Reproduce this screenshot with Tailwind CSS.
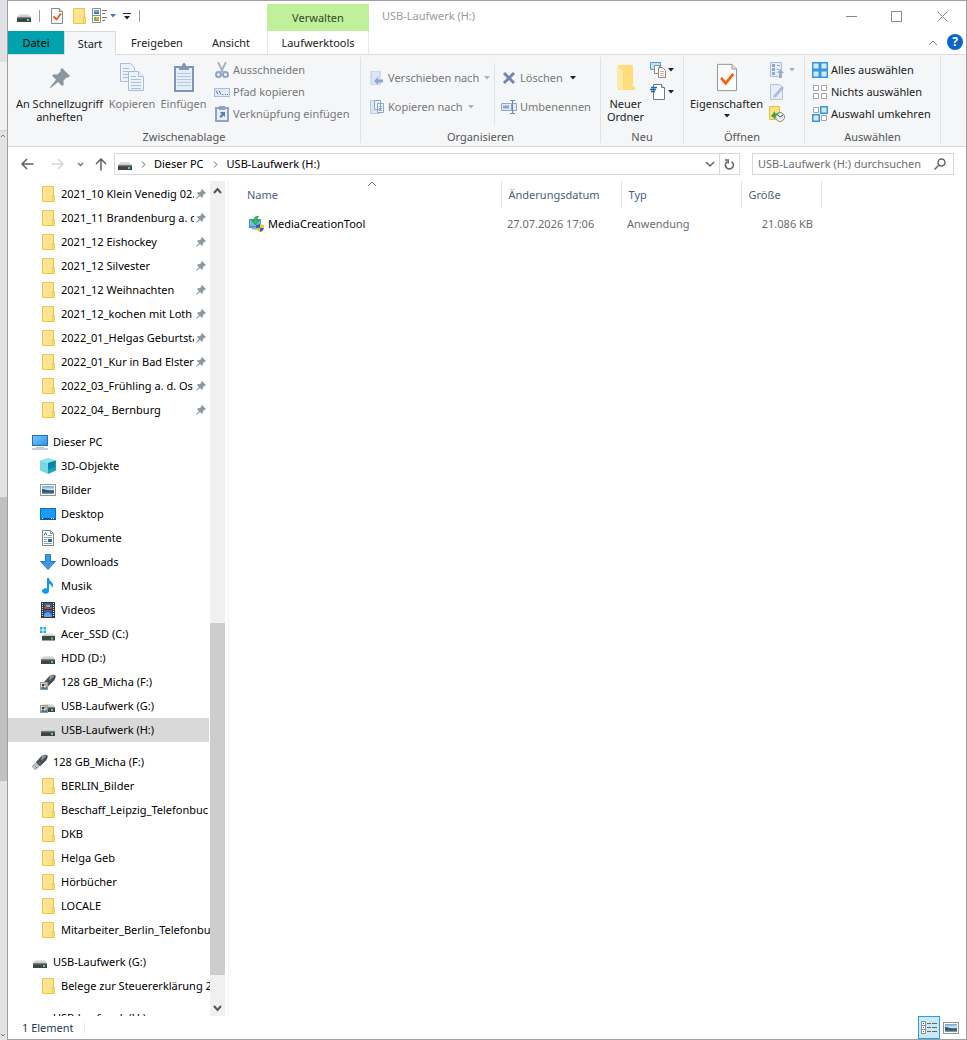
<!DOCTYPE html>
<html lang="de">
<head>
<meta charset="utf-8">
<title>USB-Laufwerk (H:)</title>
<script src="https://cdn.jsdelivr.net/npm/@tailwindcss/browser@4"></script>
</head>
<body class="flex h-screen overflow-hidden bg-white font-['Noto_Sans','Open_Sans',sans-serif] text-[11px] leading-4 text-black">

<svg width="0" height="0" class="absolute" aria-hidden="true">
  <defs>
    <linearGradient id="gFolder" x1="0" x2="1"><stop offset="0" stop-color="#ffe694"/><stop offset="1" stop-color="#ffdf85"/></linearGradient>
    <linearGradient id="gScreen" x1="0" y1="0" x2="1" y2="1"><stop offset="0" stop-color="#7cc8fa"/><stop offset="1" stop-color="#2196e8"/></linearGradient>
    <linearGradient id="gTop" x1="0" y1="0" x2="0" y2="1"><stop offset="0" stop-color="#e6e8ea"/><stop offset="1" stop-color="#bfc2c5"/></linearGradient>
    <linearGradient id="gPhoto" x1="0" y1="0" x2="0" y2="1"><stop offset="0" stop-color="#6ba0e4"/><stop offset=".5" stop-color="#e3f0f6"/><stop offset=".6" stop-color="#41705f"/><stop offset=".8" stop-color="#3b6a86"/><stop offset="1" stop-color="#7fb0dc"/></linearGradient>
    <symbol id="folder" viewBox="0 0 16 16"><path d="M2.500 .5h11v10h1v5h-12z" fill="url(#gFolder)" stroke="#e9c44f"/><path d="M12.500 15V9.500h2v5" fill="#ffe694" stroke="#e9c44f"/></symbol>
    <symbol id="pin" viewBox="0 0 10 10"><path d="M6 0l4 4-.8.800-.9-.1-1.600 1.700.2 1.900-.8.700-2.100-2L.4 10 0 9.600 3 5.900 1 3.900l.8-.8 1.900.2L5.300 1.700 5.200.8z" fill="#8b979f"/></symbol>
    <symbol id="drive" viewBox="0 0 16 16"><path d="M3.500 6h9L15 9.500H1z" fill="url(#gTop)"/><rect x="1" y="9.500" width="14" height="4.500" fill="#3e4447"/><path d="M1 9.500h14v1H1z" fill="#62696c"/><rect x="11" y="11" width="2" height="2" fill="#4ee05a"/></symbol>
    <symbol id="usb" viewBox="0 0 16 16"><path d="M9.500 2L13.500.5 16 2 14.500 6 8 12.500 3.800 8.300z" fill="#4a4f54"/><path d="M9.800 2.600l3.700-1.300 1 .7-5.500 4.800z" fill="#92999f"/><path d="M6 7.500l3 3" stroke="#7b8288"/><path d="M3.500 9L7 12.500l-3 2.800H2.800L.8 13.300v-1.500z" fill="#c9cdd1" stroke="#7a8086" stroke-width=".7"/><path d="M2.700 11.700l.8.800M4 13l.8.800" stroke="#444"/></symbol>
    <symbol id="users" viewBox="0 0 8 8"><rect x=".5" y=".5" width="7" height="7" fill="#e9e5df" stroke="#9a9a9a"/><circle cx="3" cy="3" r="1.300" fill="#57351f"/><circle cx="5.500" cy="2.500" r="1.200" fill="#c4884b"/><path d="M1.200 7c0-3 3-3 3.500-1L7 4v3z" fill="#2f7da6"/></symbol>
    <symbol id="ddblack" viewBox="0 0 6 4"><path d="M0 0h6L3 3.500z" fill="#222"/></symbol>
    <symbol id="ddgray" viewBox="0 0 6 4"><path d="M0 0h6L3 3.500z" fill="#aeb1b5"/></symbol>
    <symbol id="photo" viewBox="0 0 16 16"><rect x=".5" y="2.500" width="15" height="11" fill="#fff" stroke="#8f959b"/><rect x="2" y="4" width="12" height="8" fill="url(#gPhoto)"/><path d="M2 7c3 0 5 2 12 1.500v1.500H2z" fill="#2f5f4d"/></symbol>
    <symbol id="check" viewBox="0 0 24 32"><path d="M1.500 1.500h16l5 5v24h-21z" fill="#fbfbfb" stroke="#8b8b8b"/><path d="M17.500 1.500v5h5" fill="#e8e8e8" stroke="#8b8b8b"/><path d="M5.500 16.500l5 6L19 12" fill="none" stroke="#f7630c" stroke-width="3"/></symbol>
  </defs>
</svg>

<!-- edge of the window behind -->
<div class="flex w-[7px] shrink-0 flex-col bg-[#e3e3e3]" aria-hidden="true">
  <div class="h-[62px] bg-[#dfdfe4]"></div>
  <div class="h-[69px] border-b border-[#cfcfcf] bg-[#f1f1f2]"></div>
  <svg class="h-[10px] w-[7px]" viewBox="0 0 7 10" fill="none" stroke="#777"><path d="M1 6l2-2 2 2"/></svg>
  <div class="h-[356px]"></div>
  <div class="h-[284px] bg-[#c1c1c1]"></div>
  <div class="flex-1"></div>
  <svg class="h-[10px] w-[7px]" viewBox="0 0 7 10" fill="none" stroke="#777"><path d="M1 4l2 2 2-2"/></svg>
</div>

<div class="flex min-w-0 flex-1 flex-col border border-[#9f9f9f]">

  <!-- title bar and tabs -->
  <header class="relative flex h-[53px] shrink-0 flex-col">
    <div class="flex h-[30px] items-center">
      <div class="flex w-[259px] items-center pl-2">
        <svg class="size-4"><use href="#drive"/></svg>
        <span class="mr-[9px] ml-[7px] h-3 w-px bg-[#9a9a9a]"></span>
        <button aria-label="Eigenschaften" class="mr-[6px]"><svg class="size-4" viewBox="0 0 16 16"><path d="M2.500.5h8l3 3v12h-11z" fill="#fbfbfb" stroke="#8b8b8b"/><path d="M10.500.5v3h3" fill="#e8e8e8" stroke="#8b8b8b"/><path d="M4.500 8.500l3 3 4.500-6" fill="none" stroke="#e8562a" stroke-width="1.800"/></svg></button>
        <button aria-label="Neuer Ordner" class="mr-[5px]"><svg class="size-4"><use href="#folder"/></svg></button>
        <button aria-label="Ansicht" class="flex items-center gap-[2px]">
          <svg class="size-4" viewBox="0 0 16 16"><path d="M.5.5h8v14h-8zM.5 7.500h8" fill="#fff" stroke="#8c8c8c"/><rect x="2" y="2" width="5" height="4" fill="#5aa5e8"/><path d="M2 4l2 1 3-1v2H2z" fill="#3c6c9b"/><rect x="2" y="9" width="5" height="4" fill="#6ab04a"/><rect x="4" y="9" width="3" height="3" fill="#e8a13a"/><path d="M10 2.500h5M10 5.500h3M10 9.500h5M10 12.500h3" stroke="#777"/></svg>
          <svg class="h-1 w-[6px]" viewBox="0 0 6 4"><path d="M0 0h6L3 3.500z" fill="#4a7ab5"/></svg>
        </button>
        <button aria-label="Symbolleiste anpassen" class="ml-[7px]"><svg class="h-2 w-[8px]" viewBox="0 0 8 8"><path d="M0 1.500h8" stroke="#222"/><path d="M1 4h6L4 7.500z" fill="#222"/></svg></button>
        <span class="ml-2 h-3 w-px bg-[#9a9a9a]"></span>
      </div>
      <div class="mt-[3px] flex h-[27px] w-[102px] items-center justify-center bg-[#c1f09b] text-[#2d4a24]">Verwalten</div>
      <h1 class="ml-[13px] flex-1 text-[#9a9a9a]">USB-Laufwerk (H:)</h1>
      <button aria-label="Minimieren" class="flex h-full w-[45px] items-center justify-center"><svg class="size-[11px]" viewBox="0 0 11 11" stroke="#888" fill="none"><path d="M0 5.500h11"/></svg></button>
      <button aria-label="Maximieren" class="flex h-full w-[45px] items-center justify-center"><svg class="size-[11px]" viewBox="0 0 11 11" stroke="#888" fill="none"><path d="M.5.5h10v10H.5z"/></svg></button>
      <button aria-label="Schließen" class="flex h-full w-[47px] items-center justify-center"><svg class="size-[11px]" viewBox="0 0 11 11" stroke="#888" fill="none"><path d="M.5.5l10 10M10.500.5l-10 10"/></svg></button>
    </div>
    <nav class="flex h-[24px] text-[#222]" aria-label="Menüband">
      <button class="h-[23px] w-[56px] bg-[#00a2ad] text-black">Datei</button>
      <button class="relative z-10 h-[24px] w-[52px] border border-b-0 border-[#dadbdc] bg-[#f5f6f7]">Start</button>
      <button class="h-[23px] w-[82px]">Freigeben</button>
      <button class="h-[23px] w-[66px]">Ansicht</button>
      <button class="ml-[3px] h-[23px] w-[102px] border-x border-[#e6e6e6]">Laufwerktools</button>
      <span class="flex-1"></span>
      <button aria-label="Menüband minimieren" class="mr-[9px] flex items-center"><svg class="h-[6px] w-[10px]" viewBox="0 0 10 6" fill="none" stroke="#8a8a8a"><path d="M1 5l4-4 4 4"/></svg></button>
      <button aria-label="Hilfe" class="mr-[3px] mt-[3px] flex size-4 items-center justify-center rounded-full bg-[#0a66c8] text-[12px] font-bold text-white">?</button>
    </nav>
  </header>

  <!-- ribbon -->
  <section class="flex h-[93px] shrink-0 border-y border-[#dadbdc] bg-[#f5f6f7] pt-[2px] pb-[3px] text-[#222]">
    <div class="flex w-[353px] shrink-0 flex-col border-r border-[#e0e1e3]">
      <div class="flex flex-1 whitespace-nowrap">
        <button class="flex w-[103px] flex-col items-center leading-[13px]"><svg class="mt-[11px] mb-[9px] size-5"><use href="#pin"/></svg>An Schnellzugriff<br>anheften</button>
        <button class="flex w-[42px] flex-col items-center leading-[13px] text-[#777]">
          <svg class="mt-[6px] mb-[6px] h-7 w-6" viewBox="0 0 24 28" fill="#eef3fb" stroke="#a9bddb"><path d="M.5.5h10l4 4v14H.5z"/><path d="M3 5.500h6M3 8.500h9M3 11.500h9M3 14.500h9"/><path d="M8.500 8.500h10l5 5v14h-15z"/><path d="M18.500 8.500v5h5M11 13.500h5M11 16.500h10M11 19.500h10M11 22.500h10M11 25.500h10"/></svg>Kopieren</button>
        <button class="flex w-[61px] flex-col items-center leading-[13px] text-[#777]">
          <svg class="mt-[6px] mb-[5px] h-[29px] w-5" viewBox="0 0 20 29"><rect x="1" y="4" width="18" height="24" fill="#e6eefa" stroke="#7f93b8" stroke-width="2"/><path d="M5 3h3c0-4 4-4 4 0h3v4H5z" fill="#8496b5"/><path d="M3 10.500h14M3 13.500h14M3 16.500h14M3 19.500h14M3 22.500h14" stroke="#b4c7e3"/></svg>Einfügen</button>
        <div class="flex flex-col items-start pt-[2px] text-[#777]">
          <button class="flex h-[22px] items-center gap-[3px]"><svg class="size-4" viewBox="0 0 16 16" fill="none" stroke="#8ea3c4"><path d="M4 0l5 10M12 0L7 10" stroke-width="1.800" stroke="#a5aeb9"/><circle cx="4.500" cy="12.500" r="2.500" stroke-width="2"/><circle cx="11.500" cy="12.500" r="2.500" stroke-width="2"/></svg>Ausschneiden</button>
          <button class="flex h-[22px] items-center gap-[3px]"><svg class="size-4" viewBox="0 0 16 16" fill="none"><rect x=".5" y="4.500" width="15" height="8" fill="#e3ebf7" stroke="#a9bddb"/><path d="M2 6.500l2 4M5 6.500l2 4M8.500 10.500h1M11 10.500h1M13 10.500h1" stroke="#5f7398"/></svg>Pfad kopieren</button>
          <button class="flex h-[22px] items-center gap-[3px]"><svg class="size-4" viewBox="0 0 16 16"><rect x="2" y="2" width="12" height="13" fill="#e6eefa" stroke="#8fa3c5" stroke-width="2"/><path d="M5 0h6v4H5z" fill="#8fa3c5"/><path d="M6 6h5v5L9.500 9.500 7 12 5.500 10.500 7.500 8z" fill="#657da6"/></svg>Verknüpfung einfügen</button>
        </div>
      </div>
      <div class="h-[14px] text-center text-[#555]">Zwischenablage</div>
    </div>
    <div class="flex w-[240px] shrink-0 flex-col border-r border-[#e0e1e3]">
      <div class="flex flex-1 whitespace-nowrap pt-[6px] pb-1 text-[#777]">
        <div class="flex w-[134px] flex-col items-start border-r border-[#e0e1e3] pl-[9px]">
          <button class="mt-[4px] flex h-[22px] items-center gap-1"><svg class="size-3.5" viewBox="0 0 14 14"><path d="M1 0h9v14H1z" fill="#dce6f5" stroke="#bccce4"/><path d="M4 10l4-4v2.500h5v3H8V14z" fill="#8fa6cb"/></svg>Verschieben nach<svg class="ml-px h-1 w-[6px]"><use href="#ddgray"/></svg></button>
          <button class="mt-[7px] flex h-[22px] items-center gap-1"><svg class="size-3.5" viewBox="0 0 14 14"><path d="M.5.5h9v13h-9z" fill="#dce6f5" stroke="#bccce4"/><path d="M4.500.5h6v9h-6zM7.500 3.500h6v9h-6z" fill="#eef3fb" stroke="#8fa6cb"/><path d="M9 6.500h3M9 8.500h3M9 10.500h3" stroke="#8fa6cb"/></svg>Kopieren nach<svg class="ml-px h-1 w-[6px]"><use href="#ddgray"/></svg></button>
        </div>
        <div class="flex flex-col items-start pl-[6px]">
          <button class="mt-[4px] flex h-[22px] items-center gap-[3px]"><svg class="size-4" viewBox="0 0 16 16"><path d="M3 3l10 10M13 3L3 13" stroke="#6f87ad" stroke-width="3"/></svg><span>Löschen</span><svg class="ml-1 h-1 w-[6px]"><use href="#ddblack"/></svg></button>
          <button class="mt-[7px] flex h-[22px] items-center gap-[3px]"><svg class="size-4" viewBox="0 0 16 16" fill="none" stroke="#8fa6cb"><path d="M.5 4.500h10v7H.5zM12 4.500h3.500v7H12" fill="#e3ebf7"/><path d="M2 8h6" stroke-width="3"/><path d="M9 1.500h5M11.500 2v12M9 14.500h5" stroke="#6f87ad"/></svg>Umbenennen</button>
        </div>
      </div>
      <div class="h-[14px] text-center text-[#555]">Organisieren</div>
    </div>
    <div class="flex w-[83px] shrink-0 flex-col border-r border-[#e0e1e3]">
      <div class="flex flex-1">
        <button class="flex w-[49px] flex-col items-center leading-[13px]">
          <svg class="mt-[8px] mb-[6px] h-[26px] w-5" viewBox="0 0 20 26"><path d="M2 0h15v21l2 1v3H2z" fill="#ffdc7c"/><path d="M1 1l6 5v20l-6-4z" fill="#ffe9a8"/></svg>Neuer<br>Ordner</button>
        <div class="flex flex-col pt-[2px]">
          <button aria-label="Neues Element" class="flex h-[22px] items-center gap-[2px]"><svg class="size-4" viewBox="0 0 16 16" fill="#fff"><path d="M.5.5h10v7H.5z" fill="#bfe3f7" stroke="#4a9cc9"/><path d="M4.500 3.500h5v8h-5z" stroke="#888"/><path d="M8.500 5.500h4l3 3v7h-7z" stroke="#888"/><path d="M10 9.500h4M10 11.500h4M10 13.500h4" stroke="#e8a090"/></svg><svg class="h-1 w-[6px]"><use href="#ddblack"/></svg></button>
          <button aria-label="Einfacher Zugriff" class="flex h-[22px] items-center gap-[2px]"><svg class="size-4" viewBox="0 0 16 16" fill="#fff"><path d="M3.500.5h8l3 3v12h-11z" stroke="#777"/><path d="M11.500.5v3h3" stroke="#777"/><path d="M1 3.500h6M0 5.500h6M1 7.500h4" stroke="#1f6cb0" stroke-width="1.300"/></svg><svg class="h-1 w-[6px]"><use href="#ddblack"/></svg></button>
        </div>
      </div>
      <div class="h-[14px] text-center text-[#555]">Neu</div>
    </div>
    <div class="flex w-[121px] shrink-0 flex-col border-r border-[#e0e1e3]">
      <div class="flex flex-1">
        <button class="flex w-[85px] flex-col items-center leading-[13px]"><svg class="mt-[6px] mb-[5px] h-[29px] w-6"><use href="#check"/></svg>Eigenschaften<svg class="mt-[4px] h-1 w-[6px]"><use href="#ddblack"/></svg></button>
        <div class="flex flex-col items-start pt-[2px]">
          <button aria-label="Öffnen" class="flex h-[22px] items-center gap-[4px]"><svg class="size-4" viewBox="0 0 16 16"><path d="M1.500.5h11v14h-11z" fill="#e6eefa" stroke="#a9bddb"/><path d="M3 2h3v3H3zM3 6h3v3H3zM3 10h3v3H3z" fill="#8fa6cb"/><path d="M8 3.500h3M8 7.500h2" stroke="#8fa6cb"/><path d="M8 11l3.500-4 3.500 4h-2v5h-3v-5z" fill="#9badcf"/></svg><svg class="h-1 w-[6px]"><use href="#ddgray"/></svg></button>
          <button aria-label="Bearbeiten" class="flex h-[22px] items-center"><svg class="size-4" viewBox="0 0 16 16"><path d="M1.500.5h9l3 3v12h-12z" fill="#e6eefa" stroke="#b4c4de"/><path d="M4 14l1-3 8-9 2 2-8 9z" fill="#a9bddb"/></svg></button>
          <button aria-label="Verlauf" class="flex h-[22px] items-center"><svg class="size-4" viewBox="0 0 16 16"><path d="M.5.5h10v13H.5z" fill="#ffe27a" stroke="#e3bd45"/><circle cx="11" cy="11" r="4.500" fill="#e9ebed" stroke="#8a8a8a"/><path d="M9 9l2 2 3-2" fill="none" stroke="#555"/><path d="M2 10l4-5v2.500c2 0 3 0 4-1.500-.3 3-2 4-4 4V13z" fill="#2fa84a"/></svg></button>
        </div>
      </div>
      <div class="h-[14px] pr-1 text-center text-[#555]">Öffnen</div>
    </div>
    <div class="flex w-[136px] shrink-0 flex-col border-r border-[#e0e1e3]">
      <div class="flex flex-1 flex-col items-start whitespace-nowrap pt-[2px] pl-[7px]">
        <button class="flex h-[22px] items-center gap-[3px]"><svg class="size-4" viewBox="0 0 16 16" fill="#cdeaff" stroke="#3a96dd" stroke-width="1.500"><path d="M.7.700h6.600v6.600H.7zM8.700.7h6.600v6.600H8.700zM.7 8.700h6.600v6.600H.7zM8.700 8.700h6.600v6.600H8.700z"/></svg>Alles auswählen</button>
        <button class="flex h-[22px] items-center gap-[3px]"><svg class="size-4" viewBox="0 0 16 16" fill="#fff" stroke="#a5a5a5"><path d="M1.500 1.500h5v5h-5zM9.500 1.500h5v5h-5zM1.500 9.500h5v5h-5zM9.500 9.500h5v5h-5z"/></svg>Nichts auswählen</button>
        <button class="flex h-[22px] items-center gap-[3px]"><svg class="size-4" viewBox="0 0 16 16" fill="#fff" stroke="#a5a5a5"><path d="M1.500 1.500h5v5h-5zM9.500 9.500h5v5h-5z"/><path d="M8.700.7h6.600v6.600H8.700zM.7 8.700h6.600v6.600H.7z" fill="#cdeaff" stroke="#3a96dd" stroke-width="1.500"/></svg>Auswahl umkehren</button>
      </div>
      <div class="h-[14px] text-center text-[#555]">Auswählen</div>
    </div>
  </section>

  <!-- navigation and address bar -->
  <div class="flex h-[34px] shrink-0 items-center pr-3">
    <div class="flex w-[106px] items-center pl-[13px]">
      <button aria-label="Zurück"><svg class="h-3 w-[13px]" viewBox="0 0 13 12" fill="none" stroke="#5f5f5f" stroke-width="1.500"><path d="M12.500 6H1M6 1L1 6l5 5"/></svg></button>
      <button aria-label="Vorwärts" class="ml-[17px]"><svg class="h-3 w-[13px]" viewBox="0 0 13 12" fill="none" stroke="#d6d6d6" stroke-width="1.500"><path d="M.5 6H12M7 1l5 5-5 5"/></svg></button>
      <button aria-label="Zuletzt besucht" class="ml-[13px]"><svg class="h-[5px] w-[7px]" viewBox="0 0 7 5" fill="none" stroke="#777" stroke-width="1.500"><path d="M1 1l2.500 2.500L6 1"/></svg></button>
      <button aria-label="Nach oben" class="ml-[11px]"><svg class="h-[13px] w-[12px]" viewBox="0 0 12 13" fill="none" stroke="#5f5f5f" stroke-width="1.500"><path d="M6 12.500V1M1 6l5-5 5 5"/></svg></button>
    </div>
    <div class="flex h-[22px] min-w-0 flex-1 items-center border border-[#d9d9d9] pl-[2px]">
      <svg class="size-4"><use href="#drive"/></svg>
      <svg class="mx-[8px] h-[7px] w-[5px]" viewBox="0 0 5 7" fill="none" stroke="#666"><path d="M1 .5l3 3-3 3"/></svg>
      <a href="#">Dieser PC</a>
      <svg class="mx-[9px] h-[7px] w-[5px]" viewBox="0 0 5 7" fill="none" stroke="#666"><path d="M1 .5l3 3-3 3"/></svg>
      <a href="#">USB-Laufwerk (H:)</a>
      <span class="flex-1"></span>
      <button aria-label="Vorherige Orte" class="mr-1"><svg class="h-[7px] w-[10px]" viewBox="0 0 10 7" fill="none" stroke="#666" stroke-width="1.500"><path d="M1 1l4 4 4-4"/></svg></button>
      <button aria-label="Aktualisieren" class="flex h-full w-[20px] items-center justify-center border-l border-[#d9d9d9]"><svg class="size-[11px]" viewBox="0 0 11 11" fill="none" stroke="#666" stroke-width="1.600"><path d="M7.500 2.600A4 4 0 1 1 3.200 2.700"/><path d="M1 1h3.200v3.500"/></svg></button>
    </div>
    <label class="ml-3 flex h-[22px] w-[202px] items-center border border-[#d9d9d9] pr-[7px] pl-[5px]">
      <input type="text" aria-label="Durchsuchen" placeholder="USB-Laufwerk (H:) durchsuchen" class="min-w-0 flex-1 outline-none placeholder:text-[#6d6d6d]">
      <svg class="size-3" viewBox="0 0 12 12" fill="none" stroke="#666" stroke-width="1.500"><circle cx="7.500" cy="4.500" r="3.500"/><path d="M5 7L.5 11.500"/></svg>
    </label>
  </div>

  <!-- main area -->
  <div class="flex min-h-0 flex-1">
    <nav aria-label="Navigationsbereich" class="w-[202px] shrink-0 overflow-hidden whitespace-nowrap pt-px">
      <ul class="mb-2 [&_a]:flex [&_a]:h-6 [&_a]:items-center [&_a]:pr-1 [&_a]:pl-8 [&_span]:ml-[5px] [&_span]:mr-[2px] [&_span]:flex-1 [&_span]:overflow-hidden">
        <li><a href="#"><svg class="size-4 shrink-0"><use href="#folder"/></svg><span>2021_10 Klein Venedig 02.</span><svg class="size-[10px] shrink-0"><use href="#pin"/></svg></a></li>
        <li><a href="#"><svg class="size-4 shrink-0"><use href="#folder"/></svg><span>2021_11 Brandenburg a. d</span><svg class="size-[10px] shrink-0"><use href="#pin"/></svg></a></li>
        <li><a href="#"><svg class="size-4 shrink-0"><use href="#folder"/></svg><span>2021_12 Eishockey</span><svg class="size-[10px] shrink-0"><use href="#pin"/></svg></a></li>
        <li><a href="#"><svg class="size-4 shrink-0"><use href="#folder"/></svg><span>2021_12 Silvester</span><svg class="size-[10px] shrink-0"><use href="#pin"/></svg></a></li>
        <li><a href="#"><svg class="size-4 shrink-0"><use href="#folder"/></svg><span>2021_12 Weihnachten</span><svg class="size-[10px] shrink-0"><use href="#pin"/></svg></a></li>
        <li><a href="#"><svg class="size-4 shrink-0"><use href="#folder"/></svg><span>2021_12_kochen mit Loth</span><svg class="size-[10px] shrink-0"><use href="#pin"/></svg></a></li>
        <li><a href="#"><svg class="size-4 shrink-0"><use href="#folder"/></svg><span>2022_01_Helgas Geburtsta</span><svg class="size-[10px] shrink-0"><use href="#pin"/></svg></a></li>
        <li><a href="#"><svg class="size-4 shrink-0"><use href="#folder"/></svg><span>2022_01_Kur in Bad Elster</span><svg class="size-[10px] shrink-0"><use href="#pin"/></svg></a></li>
        <li><a href="#"><svg class="size-4 shrink-0"><use href="#folder"/></svg><span>2022_03_Frühling a. d. Os</span><svg class="size-[10px] shrink-0"><use href="#pin"/></svg></a></li>
        <li><a href="#"><svg class="size-4 shrink-0"><use href="#folder"/></svg><span>2022_04_ Bernburg</span><svg class="size-[10px] shrink-0"><use href="#pin"/></svg></a></li>
      </ul>
      <a href="#" class="flex h-6 items-center gap-[5px] pl-6"><svg class="size-4 shrink-0" viewBox="0 0 16 16"><rect x=".5" y="1.500" width="15" height="10" fill="url(#gScreen)" stroke="#2a6fa8"/><path d="M4 13h8v1H4z" fill="#b9c4cc"/><path d="M0 14.500h16v1H0z" fill="#8fa0ad"/></svg>Dieser PC</a>
      <ul class="mb-2 [&_a]:flex [&_a]:h-6 [&_a]:items-center [&_a]:gap-[5px] [&_a]:pl-8">
        <li><a href="#"><svg class="size-4 shrink-0" viewBox="0 0 16 16"><path d="M0 2.500L8 0l8 2.500L8 5z" fill="#8de3ea"/><path d="M8 5l8-2.500v10L8 16z" fill="#17a5c0"/><path d="M0 2.500L8 5v11l-8-3.500z" fill="#7ad6e2"/><path d="M8 5l8-2.500-1.500 7L8 12z" fill="#0787a5"/></svg>3D-Objekte</a></li>
        <li><a href="#"><svg class="size-4 shrink-0"><use href="#photo"/></svg>Bilder</a></li>
        <li><a href="#"><svg class="size-4 shrink-0" viewBox="0 0 16 16"><rect x=".5" y="2.500" width="15" height="11" fill="#1c9df5" stroke="#0e6db5"/><path d="M1 12h14v1.500H1z" fill="#0b4f86"/><path d="M11 12.500h1M13 12.500h1M2 12.500h1" stroke="#fff"/></svg>Desktop</a></li>
        <li><a href="#"><svg class="size-4 shrink-0" viewBox="0 0 16 16"><path d="M2.500.5h8l3 3v12h-11z" fill="#fff" stroke="#848484"/><path d="M10.500.5v3h3" fill="none" stroke="#848484"/><path d="M8 5.500h4M4 7.500h8M4 9.500h3M4 11.500h3M4 13.500h8" stroke="#7fa8c0"/><path d="M4 5.500l1.500-3L7 5.500" fill="none" stroke="#2f7fb8"/><path d="M8 9h4v3H8z" fill="#3a668f"/></svg>Dokumente</a></li>
        <li><a href="#"><svg class="size-4 shrink-0" viewBox="0 0 16 16"><path d="M5.500.5h5v7h5L8 15.500.5 7.500h5z" fill="#3b97e8" stroke="#2678c4"/></svg>Downloads</a></li>
        <li><a href="#"><svg class="size-4 shrink-0" viewBox="0 0 16 16"><path d="M7 0h2c0 3 4 4 4 7 0 2-1 3-1 3 0-3-2-4-3-4v7a3.500 2.800 0 1 1-2-2.500z" fill="#109ae8"/></svg>Musik</a></li>
        <li><a href="#"><svg class="size-4 shrink-0" viewBox="0 0 16 16"><path d="M1 0h14v16H1z" fill="#33373a"/><path d="M4 1h8v6H4zM4 8h8v7H4z" fill="#2a62b8"/><path d="M6 3h4v2H6z" fill="#d9a43a"/><path d="M4 5l2-1 2 2 4-1v2H4z" fill="#b5482e"/><path d="M4 12l4-2 4 3v2H4z" fill="#6c9fe0"/><path d="M2.500 1v14M13.500 1v14" stroke="#e6e6e6" stroke-dasharray="1 1"/></svg>Videos</a></li>
        <li><a href="#"><svg class="size-4 shrink-0" viewBox="0 0 16 16"><path d="M4 7.500h9l2 3H2z" fill="url(#gTop)"/><path d="M2 10h13v4.500H2z" fill="#3e4447"/><path d="M11 11.500h2v2h-2z" fill="#4ee05a"/><path d="M0 1h2.500v2.500H0zM3.500 1H6v2.500H3.500zM0 4.500h2.500V7H0zM3.500 4.500H6V7H3.500z" fill="#14b4ea"/></svg>Acer_SSD (C:)</a></li>
        <li><a href="#"><svg class="size-4 shrink-0"><use href="#drive"/></svg>HDD (D:)</a></li>
        <li><a href="#"><svg class="size-4 shrink-0" viewBox="0 0 16 16"><use href="#usb" width="16" height="16"/><use href="#users" x="0" y="8" width="8" height="8"/></svg>128 GB_Micha (F:)</a></li>
        <li><a href="#"><svg class="size-4 shrink-0" viewBox="0 0 16 16"><use href="#drive" width="16" height="16"/><use href="#users" x="0" y="7" width="8" height="8"/></svg>USB-Laufwerk (G:)</a></li>
        <li class="mr-px bg-[#d9d9d9]"><a href="#" aria-current="page"><svg class="size-4 shrink-0"><use href="#drive"/></svg>USB-Laufwerk (H:)</a></li>
      </ul>
      <a href="#" class="flex h-6 items-center gap-[5px] pl-6"><svg class="size-4 shrink-0"><use href="#usb"/></svg>128 GB_Micha (F:)</a>
      <ul class="mb-2 [&_a]:flex [&_a]:h-6 [&_a]:items-center [&_a]:gap-[5px] [&_a]:pl-8">
        <li><a href="#"><svg class="size-4 shrink-0"><use href="#folder"/></svg>BERLIN_Bilder</a></li>
        <li><a href="#"><svg class="size-4 shrink-0"><use href="#folder"/></svg>Beschaff_Leipzig_Telefonbuc</a></li>
        <li><a href="#"><svg class="size-4 shrink-0"><use href="#folder"/></svg>DKB</a></li>
        <li><a href="#"><svg class="size-4 shrink-0"><use href="#folder"/></svg>Helga Geb</a></li>
        <li><a href="#"><svg class="size-4 shrink-0"><use href="#folder"/></svg>Hörbücher</a></li>
        <li><a href="#"><svg class="size-4 shrink-0"><use href="#folder"/></svg>LOCALE</a></li>
        <li><a href="#"><svg class="size-4 shrink-0"><use href="#folder"/></svg>Mitarbeiter_Berlin_Telefonbu</a></li>
      </ul>
      <a href="#" class="flex h-6 items-center gap-[5px] pl-6"><svg class="size-4 shrink-0"><use href="#drive"/></svg>USB-Laufwerk (G:)</a>
      <ul class="mb-2"><li><a href="#" class="flex h-6 items-center gap-[5px] pl-8"><svg class="size-4 shrink-0"><use href="#folder"/></svg>Belege zur Steuererklärung 2</a></li></ul>
      <a href="#" class="flex h-6 items-center gap-[5px] pl-6"><svg class="size-4 shrink-0"><use href="#drive"/></svg>USB-Laufwerk (H:)</a>
    </nav>

    <!-- scroll bar -->
    <div class="mr-px flex w-[15px] shrink-0 flex-col items-center bg-[#f0f0f0]">
      <svg class="h-[20px] w-[9px]" viewBox="0 0 9 20" fill="none" stroke="#555" stroke-width="2"><path d="M1 12l3.500-4L8 12"/></svg>
      <div class="flex-[422]"></div>
      <div class="w-full flex-[352] bg-[#cdcdcd]"></div>
      <div class="flex-[24]"></div>
      <svg class="h-[17px] w-[9px]" viewBox="0 0 9 17" fill="none" stroke="#555" stroke-width="2"><path d="M1 7l3.500 4L8 7"/></svg>
    </div>
    <div class="mr-[11px] w-[3px] shrink-0 border-r border-[#f3f3f3]"></div>

    <!-- file list -->
    <main class="min-w-0 flex-1">
      <table class="w-[581px] table-fixed border-collapse text-left">
        <colgroup><col class="w-[261px]"><col class="w-[120px]"><col class="w-[120px]"><col class="w-[80px]"></colgroup>
        <thead class="text-[#4c607a]">
          <tr class="h-[27px] [&_th]:border-r [&_th]:border-[#e5e5e5] [&_th]:pl-[7px] [&_th]:font-normal">
            <th class="relative">Name<svg class="absolute top-0 left-[127px] h-[6px] w-[10px]" viewBox="0 0 10 6" fill="none" stroke="#777"><path d="M1 5l4-4 4 4"/></svg></th>
            <th class="whitespace-nowrap">Änderungsdatum</th><th>Typ</th><th>Größe</th>
          </tr>
        </thead>
        <tbody class="text-[#6d6d6d]">
          <tr class="h-[32px]">
            <td class="pl-2 text-black"><a href="#" class="flex items-center gap-1"><svg class="size-4" viewBox="0 0 16 16"><path d="M1 3h12v9H1z" fill="#4a92dc"/><path d="M2 4h10v6H2z" fill="#79b7f0"/><path d="M3 13l3-2h4v3z" fill="#9aa7b5"/><path d="M11 0C7 0 6 2 6 4.500H3.500L7.500 9l4-4.500H9C9 2.500 9.500 1 11 0z" fill="#2fc45a" stroke="#1a9440" stroke-width=".6"/><path d="M12 8l4 1c0 4-1 6-4 7-3-1-4-3-4-7z" fill="#f4c33a"/><path d="M12 8v4H8V9zM12 12h4c-.5 2-1.500 3.300-4 4z" fill="#2c66b8"/></svg>MediaCreationTool</a></td>
            <td class="pl-[6px]">27.07.2026 17:06</td><td class="pl-[6px]">Anwendung</td><td class="pr-2 text-right">21.086 KB</td>
          </tr>
        </tbody>
      </table>
    </main>
  </div>

  <!-- status bar -->
  <footer class="flex h-[23px] shrink-0 items-center pl-[14px] text-[#1e395b]">
    <span>1 Element</span><span class="ml-[10px] h-3 w-px bg-[#ececec]"></span>
    <span class="flex-1"></span>
    <button aria-label="Details" class="flex h-[23px] w-[22px] items-center justify-center border border-[#26a0da] bg-[#cbe8f6]"><svg class="h-[13px] w-4" viewBox="0 0 16 13" fill="#fff" stroke="#8a8a8a"><path d="M.5.500h4v4h-4zM.5 4.500h4v4h-4zM.5 8.500h4v4h-4z"/><path d="M6 2.500h4M11 2.500h5M6 6.500h4M11 6.500h5M6 10.500h4M11 10.500h5" stroke="#666"/><path d="M2 2.500h1" stroke="#358"/><path d="M2 6.500h1" stroke="#27c"/><path d="M2 10.500h1" stroke="#c22"/></svg></button>
    <button aria-label="Große Symbole" class="mr-[7px] ml-[3px]"><svg class="size-4"><use href="#photo"/></svg></button>
  </footer>
</div>
</body>
</html>
